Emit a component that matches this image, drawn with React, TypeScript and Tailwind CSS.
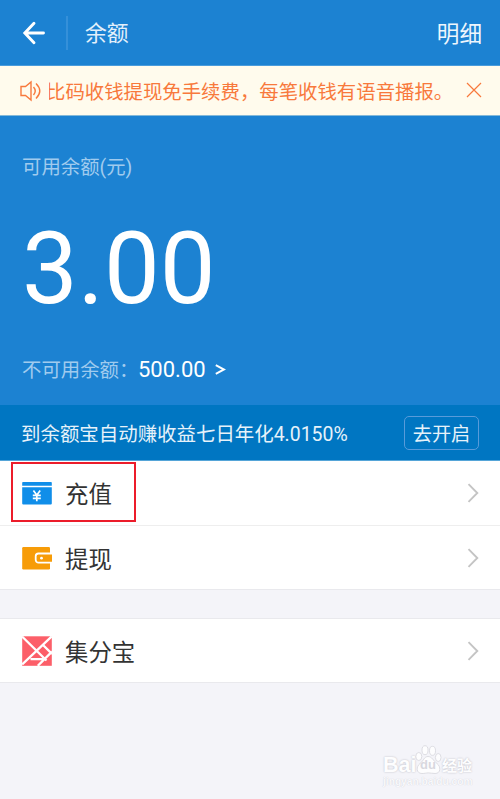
import React from 'react';

const Chevron = () => (
  <svg className="mr-[21px] shrink-0" width="12" height="20" viewBox="0 0 12 20" fill="none" stroke="#c4c4c4" strokeWidth="1.9">
    <path d="M1.5 1.2 L10.3 10 L1.5 18.8" />
  </svg>
);

const CardIcon = () => (
  <svg width="30" height="30" viewBox="0 0 30 30">
    <path d="M1 4h28a.8.8 0 0 1 .8.8V7.700H.2V4.800a.8.8 0 0 1 .8-.8z" fill="#108ee9" />
    <path d="M.2 9.300h29.600V25.400a1 1 0 0 1-1 1H1.200a1 1 0 0 1-1-1z" fill="#108ee9" />
    <path d="M11.400 12.600l3.400 4.400 3.400-4.400M14.800 17v6.300M10.800 17.400h8M10.800 20.300h8" fill="none" stroke="#fff" strokeWidth="1.700" />
  </svg>
);

const WalletIcon = () => (
  <svg width="30" height="30" viewBox="0 0 30 30">
    <rect x=".2" y="4" width="27.800" height="22.500" rx="1.200" fill="#f79c08" />
    <path d="M31 10.500H16.500a2.800 2.800 0 0 0-2.800 2.800v3.500a2.800 2.800 0 0 0 2.800 2.800H31z" fill="#f79c08" stroke="#fff" strokeWidth="1.800" />
    <circle cx="19.500" cy="15.200" r="1.400" fill="#fff" />
  </svg>
);

const PointsIcon = () => (
  <svg width="30" height="30" viewBox="0 0 30 30">
    <rect x=".2" y=".3" width="29.600" height="29.500" fill="#fc5f69" />
    <path d="M0 .5L24.500 24.500M29.800 .3L.2 28.500M21.500 9.500L30 18M30 15.500L15.800 29.800M8.500 23.200H21" fill="none" stroke="#fff" strokeWidth="2.300" />
  </svg>
);

const Row = ({ icon, label }: { icon: React.ReactNode; label: string }) => (
  <div className="flex h-[63px] items-center bg-white pl-[22px]">
    {icon}
    <span className="ml-[13px] flex-1 pt-[4px] text-[23.4px] leading-[34px] text-[#333]">{label}</span>
    <Chevron />
  </div>
);

export default function App() {
  return (
    <div lang="zh-CN" className="relative flex h-[799px] w-[500px] flex-col overflow-hidden bg-[#f4f4f9] font-['Roboto','Noto_Sans_CJK_SC',sans-serif]">
      <header className="flex h-[66px] shrink-0 items-center border-b border-[#4a9cdc] bg-[#1c82d2] pr-[18px] pl-[22px] text-white">
        <svg width="24" height="24" viewBox="0 0 24 24" fill="none" stroke="#fff" strokeWidth="2.900" strokeLinecap="round">
          <path d="M12 2.200L2.800 12l9.200 9.800M3 12h18.500" />
        </svg>
        <div className="ml-5 h-[34px] w-[2px] bg-[#3590d9]" />
        <span className="ml-[17px] flex-1 pt-[2px] text-[21.800px] leading-8 text-[#e3f0fb]">余额</span>
        <span className="pt-[4px] text-[22.600px] leading-8 text-[#eef6fd]">明细</span>
      </header>

      <div className="flex h-[50px] shrink-0 items-center border-b border-[#84b9d8] bg-[#fffbed] pl-5 text-[#f8793c]">
        <svg width="22" height="22" viewBox="0 0 22 22" fill="none" stroke="#f8793c" strokeWidth="1.400">
          <path d="M1 6.500h4.500L11 2v18L5.500 15.500H1zM13.500 7q3.500 4 0 8M16 3.500q7.500 7.500 0 15" />
        </svg>
        <div className="ml-[7px] flex w-[401px] justify-start overflow-hidden pt-[4px]">
          <span className="-ml-[3px] text-[19.400px] leading-7 whitespace-nowrap">比码收钱提现免手续费，每笔收钱有语音播报。</span>
        </div>
        <svg className="mb-px ml-4" width="16" height="16" viewBox="0 0 16 16" fill="none" stroke="#f8793c" strokeWidth="1.200">
          <path d="M1 1l14 14M15 1L1 15" />
        </svg>
      </div>

      <section className="flex h-[289px] shrink-0 flex-col bg-[#1c82d2] pl-[22px] text-white">
        <span className="mt-[38px] text-[19.400px] leading-7 text-[#a0cbee]">可用余额(元)</span>
        <span className="mt-[37px] text-[99.300px] leading-[100px]">3.00</span>
        <div className="mt-[33px] flex items-center leading-8">
          <span className="w-[116px] pt-[3px] text-[19.400px] whitespace-nowrap text-[#a0cbee]">不可用余额：</span>
          <span className="text-[22px]">500.00</span>
          <svg className="ml-[9px]" width="11" height="12" viewBox="0 0 11 12" fill="none" stroke="#fff" strokeWidth="2">
            <path d="M.8 1.200L9 5.500 .8 9.800" />
          </svg>
        </div>
      </section>

      <div className="flex h-[56px] shrink-0 items-center border-b border-[#55a5d8] bg-[#0076c2] pr-[21px] pl-[21px] text-[#e6f2fa]">
        <span className="flex-1 pt-[4px] text-[19.450px] leading-7">到余额宝自动赚收益七日年化4.0150%</span>
        <div className="flex h-[34px] w-[75px] items-center justify-center rounded-[5px] border-[1.500px] border-[#589bda] pt-[4px] text-[19.200px] leading-7">去开启</div>
      </div>

      <main className="flex flex-col">
        <div className="relative border-b border-[#eee] bg-white pb-px">
          <Row icon={<CardIcon />} label="充值" />
          <div className="absolute top-[1px] left-[11px] h-[60px] w-[125px] border-2 border-[#ec1c2a]" />
        </div>
        <div className="border-b border-[#e9e9ed]">
          <Row icon={<WalletIcon />} label="提现" />
        </div>
        <div className="mt-[28px] border-y border-[#e9e9ed]">
          <Row icon={<PointsIcon />} label="集分宝" />
        </div>
      </main>

      <div className="absolute top-[745px] left-[383px] h-[46px] w-[94px] text-[#fdfdfe] [text-shadow:0_0_2px_#b8b8c0]">
        <div className="flex h-[30px] items-end">
          <span className="w-[32px] font-['Liberation_Sans',sans-serif] text-[21.500px] leading-[20px] font-bold">Bai</span>
          <div className="relative h-[30px] w-[27px]">
            <svg width="27" height="30" viewBox="0 0 27 30" fill="#fdfdfe" stroke="#d6d6dc" strokeWidth=".8">
              <ellipse cx="3.800" cy="11.500" rx="3" ry="4" />
              <ellipse cx="10" cy="5.200" rx="3" ry="4.500" />
              <ellipse cx="17.500" cy="5.800" rx="3" ry="4.500" />
              <ellipse cx="23.200" cy="12.500" rx="2.800" ry="4" />
              <path d="M13 11.500c-4 0-4 4-8 7s-4 10 2 10c3 0 4-.6 6.500-.6s4 .6 6.500.6c6 0 6-7 2-10s-5-7-9-7z" />
            </svg>
            <span className="absolute bottom-[3px] left-[5px] font-['Liberation_Sans',sans-serif] text-[13px] leading-[14px] font-bold text-[#d8d8df] [text-shadow:none]">du</span>
          </div>
          <span className="text-[15px] leading-[18px] font-bold whitespace-nowrap">经验</span>
        </div>
        <div className="font-['Liberation_Sans',sans-serif] text-[10.200px] leading-[14px] font-bold whitespace-nowrap text-[#f9f9fc] [text-shadow:0_0_1px_#c8c8d0]">jingyan.baidu.com</div>
      </div>
    </div>
  );
}
